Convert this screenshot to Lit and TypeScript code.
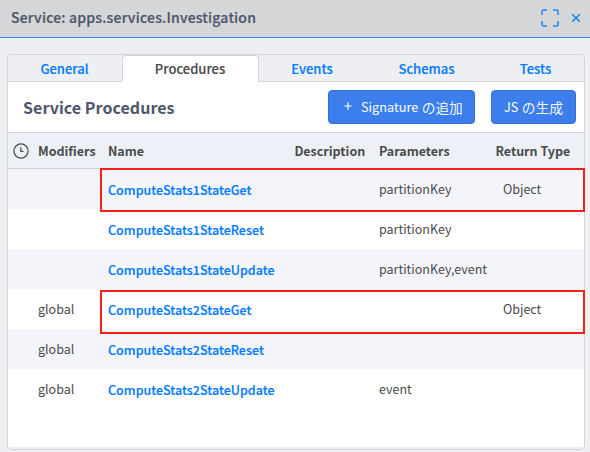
import { LitElement, html, css } from "lit";
import { customElement } from "lit/decorators.js";
import { classMap } from "lit/directives/class-map.js";

interface Procedure {
  modifier: string;
  name: string;
  parameters: string;
  returnType: string;
  marked?: boolean;
}

const TABS = ["General", "Procedures", "Events", "Schemas", "Tests"];

const PROCEDURES: Procedure[] = [
  { modifier: "", name: "ComputeStats1StateGet", parameters: "partitionKey", returnType: "Object", marked: true },
  { modifier: "", name: "ComputeStats1StateReset", parameters: "partitionKey", returnType: "" },
  { modifier: "", name: "ComputeStats1StateUpdate", parameters: "partitionKey,event", returnType: "" },
  { modifier: "global", name: "ComputeStats2StateGet", parameters: "", returnType: "Object", marked: true },
  { modifier: "global", name: "ComputeStats2StateReset", parameters: "", returnType: "" },
  { modifier: "global", name: "ComputeStats2StateUpdate", parameters: "event", returnType: "" },
];

@customElement("app-root")
export class AppRoot extends LitElement {
  static styles = css`
    :host {
      display: flex;
      flex-direction: column;
      box-sizing: border-box;
      height: 452px;
      background: #eeeff3;
      color: #4b4b4b;
      font: 400 12.5px/20px "Noto Sans CJK JP", sans-serif;
      white-space: nowrap;
      overflow: hidden;
    }
    * { box-sizing: border-box; }
    .titlebar {
      flex: none;
      display: flex;
      align-items: center;
      height: 38px;
      padding: 0 9px 2px 11px;
      background: #d5d6d8;
      border-bottom: 1px solid #4080e4;
    }
    .title {
      flex: 1;
      margin-top: -2px;
      color: #4d566b;
      font-weight: 500;
      font-size: 14px;
      letter-spacing: 0.2px;
      -webkit-text-stroke: 0.2px;
    }
    .expand { width: 18px; height: 18px; margin-right: 12px; }
    .close { width: 10px; height: 10px; }
    .panel {
      flex: none;
      display: flex;
      flex-direction: column;
      width: 578px;
      height: 396px;
      margin: 16px 0 0 7px;
      border: 1px solid #d4d5d7;
      border-radius: 4px;
      background: #fff;
    }
    .tabs {
      flex: none;
      display: grid;
      grid-template-columns: 114px 137px 107px 122px 96px;
      grid-template-rows: 27px;
      height: 27px;
      background: #eeeff3;
      border-radius: 3px 3px 0 0;
    }
    .tab {
      text-align: center;
      line-height: 28px;
      padding-right: 1px;
      font-weight: 500;
      font-size: 13px;
      color: #007bff;
      border-bottom: 1px solid #d4d5d7;
      -webkit-text-stroke: 0.15px;
    }
    .tab.active {
      color: #4b4b4b;
      background: #fff;
      border: 1px solid #d4d5d7;
      border-width: 1px 1px 0;
      border-radius: 4px 4px 0 0;
      line-height: 26px;
    }
    .toolbar {
      flex: none;
      display: flex;
      align-items: flex-start;
      height: 50px;
      padding: 8px 8px 0 15px;
    }
    .heading {
      flex: 1;
      margin: 0;
      color: #4d566b;
      font-size: 16px;
      font-weight: 700;
      line-height: 34px;
      letter-spacing: 0.05px;
    }
    .button {
      display: flex;
      align-items: center;
      justify-content: flex-start;
      height: 34px;
      margin: 0 0 0 16px;
      padding: 0;
      border: 1px solid #3672d2;
      border-radius: 4px;
      background: #3b7eec;
      color: #fff;
      font: inherit;
      font-size: 12.7px;
    }
    .add { width: 147px; padding-left: 15px; }
    .generate { width: 85px; padding-left: 12px; }
    .ja { font-size: 13.7px; font-weight: 350; line-height: 18px; margin-left: 3.5px; padding-bottom: 1px; }
    .plus { width: 8px; height: 8px; margin: -2px 9px 0 0; }
    .head, .row {
      flex: none;
      display: grid;
      grid-template-columns: 30px 70px 187px 84px 117px 88px;
    }
    .head {
      height: 37px;
      border-top: 1px solid #d4d5d7;
      border-bottom: 1px solid #d4d5d7;
      background: #edf0f7;
      font-weight: 700;
      line-height: 35px;
    }
    .head .shift { margin-left: -0.6px; }
    .clock { width: 16px; height: 16px; margin: 10px 0 0 5px; }
    .row { position: relative; height: 40px; line-height: 40px; }
    .row:nth-child(odd) { background: #f4f5fb; }
    .rows { flex: 1; }
    .name {
      color: #007bff;
      font-weight: 500;
      padding-top: 1px;
      letter-spacing: 0.03px;
      -webkit-text-stroke: 0.15px;
    }
    .return { padding-left: 7px; }
    .mark {
      position: absolute;
      z-index: 1;
      left: 92px;
      right: -1px;
      top: -1px;
      height: 44px;
      border: 2px solid #fb2016;
    }
    .row:nth-child(4) .mark { top: 1px; }
    .footer { flex: none; height: 2px; background: #eeeff3; border-radius: 0 0 3px 3px; }
  `;

  render() {
    return html`
      <header class="titlebar">
        <span class="title">Service: apps.services.Investigation</span>
        <svg class="expand" viewBox="0 0 18 18" fill="none" stroke="#198af5" stroke-width="1.5">
          <path d="M1 6V2.5Q1 1 2.5 1H6M12 1h3.5Q17 1 17 2.5V6M17 12v3.5q0 1.5-1.5 1.5H12M6 17H2.5Q1 17 1 15.5V12" />
        </svg>
        <svg class="close" viewBox="0 0 10 10" fill="none" stroke="#198af5" stroke-width="1.6">
          <path d="M1.2 1.2l7.6 7.6M8.8 1.2L1.2 8.8" />
        </svg>
      </header>
      <main class="panel">
        <nav class="tabs">
          ${TABS.map((tab) => html`<span class=${classMap({ tab: true, active: tab === "Procedures" })}>${tab}</span>`)}
        </nav>
        <div class="toolbar">
          <h2 class="heading">Service Procedures</h2>
          <button class="button add">
            <svg class="plus" viewBox="0 0 8 8" stroke="#fff" stroke-width="1.2"><path d="M4 .3v7.4M.3 4h7.4" /></svg>
            <span>Signature</span><span class="ja">の追加</span>
          </button>
          <button class="button generate"><span>JS</span><span class="ja">の生成</span></button>
        </div>
        <div class="head">
          <svg class="clock" viewBox="0 0 16 16" fill="none" stroke="#4b4b4b" stroke-width="1.2">
            <circle cx="8" cy="8" r="7.1" /><path d="M7.8 4.5V8.3H10.5" />
          </svg>
          <span>Modifiers</span><span>Name</span><span class="shift">Description</span><span>Parameters</span><span class="shift">Return Type</span>
        </div>
        <div class="rows">
          ${PROCEDURES.map((p) => html`
            <div class="row">
              <span></span>
              <span>${p.modifier}</span>
              <span class="name">${p.name}</span>
              <span></span>
              <span>${p.parameters}</span>
              <span class="return">${p.returnType}</span>
              ${p.marked ? html`<div class="mark"></div>` : ""}
            </div>`)}
        </div>
        <div class="footer"></div>
      </main>
    `;
  }
}
